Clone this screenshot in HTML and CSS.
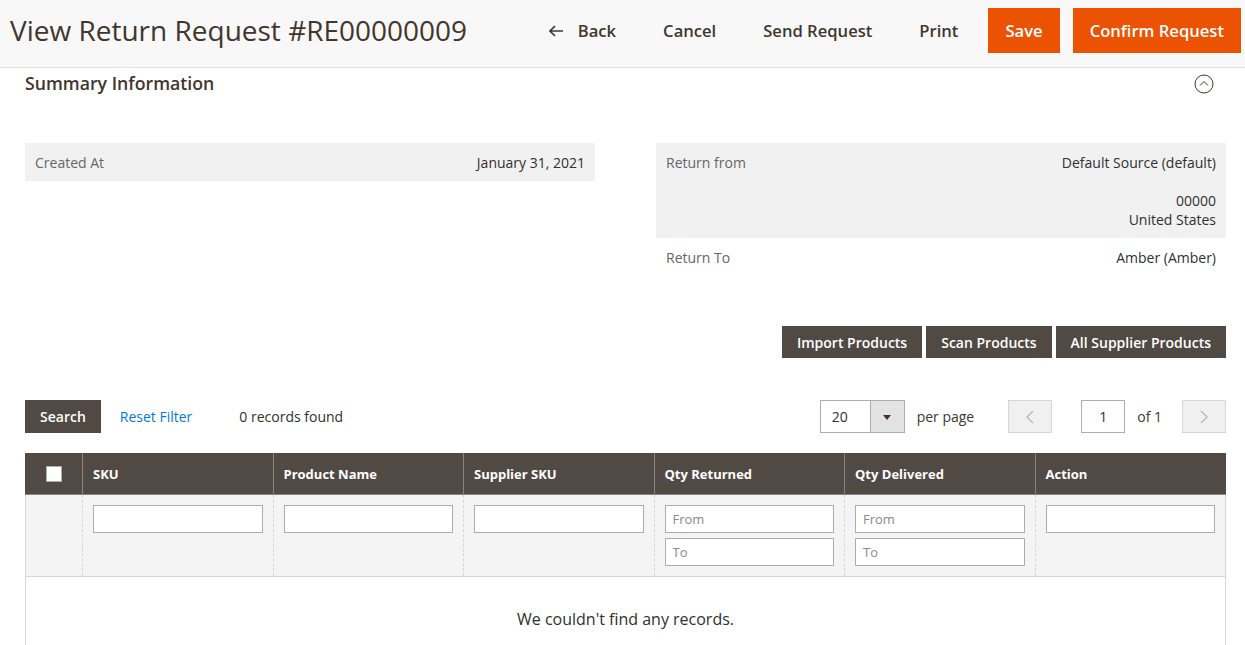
FILE: index.html
```html
<!DOCTYPE html>
<html lang="en">
<head>
    <meta charset="UTF-8">
    <meta name="viewport" content="width=device-width, initial-scale=1.0">
    <title>View Return Request #RE00000009</title>
    <link rel="stylesheet" href="styles.css">
</head>
<body>
    <header class="page-header">
        <h1 class="page-title">View Return Request #RE00000009</h1>
        <div class="page-actions">
            <button class="action-link back">
                <svg width="15" height="12" viewBox="0 0 15 12"><path d="M6 1 L1 6 L6 11 M1 6 H14" fill="none" stroke="#41362f" stroke-width="1.6"/></svg>
                Back
            </button>
            <button class="action-link">Cancel</button>
            <button class="action-link">Send Request</button>
            <button class="action-link">Print</button>
            <button class="action-primary">Save</button>
            <button class="action-primary">Confirm Request</button>
        </div>
    </header>

    <main class="page-content">
        <section class="summary">
            <div class="section-title">
                <span>Summary Information</span>
                <svg class="collapse" width="20" height="20" viewBox="0 0 20 20"><circle cx="10" cy="10" r="9" fill="none" stroke="#41362f" stroke-width="1"/><path d="M6 11.5 L10 7.5 L14 11.5" fill="none" stroke="#41362f" stroke-width="1"/></svg>
            </div>
            <div class="summary-cols">
                <table class="info-table">
                    <tr class="shaded">
                        <th>Created At</th>
                        <td>January 31, 2021</td>
                    </tr>
                </table>
                <table class="info-table">
                    <tr class="shaded">
                        <th>Return from</th>
                        <td>Default Source (default)<br><br>00000<br>United States</td>
                    </tr>
                    <tr>
                        <th>Return To</th>
                        <td>Amber (Amber)</td>
                    </tr>
                </table>
            </div>
        </section>

        <div class="product-actions">
            <button class="action-secondary">Import Products</button>
            <button class="action-secondary">Scan Products</button>
            <button class="action-secondary">All Supplier Products</button>
        </div>

        <div class="grid-toolbar">
            <div class="toolbar-left">
                <button class="action-secondary search">Search</button>
                <a class="reset-link" href="#">Reset Filter</a>
                <span class="records">0 records found</span>
            </div>
            <div class="pager">
                <div class="limit">
                    <span class="limit-value">20</span>
                    <span class="limit-toggle"></span>
                </div>
                <span class="per-page">per page</span>
                <button class="pager-btn prev">
                    <svg width="8" height="14" viewBox="0 0 8 14"><path d="M7 1 L1 7 L7 13" fill="none" stroke="#b8b8b8" stroke-width="1.3"/></svg>
                </button>
                <input class="page-input" type="text" value="1">
                <span class="page-total">of 1</span>
                <button class="pager-btn next">
                    <svg width="8" height="14" viewBox="0 0 8 14"><path d="M1 1 L7 7 L1 13" fill="none" stroke="#b8b8b8" stroke-width="1.3"/></svg>
                </button>
            </div>
        </div>

        <table class="data-grid">
            <thead>
                <tr>
                    <th class="col-check"><span class="checkbox"></span></th>
                    <th>SKU</th>
                    <th>Product Name</th>
                    <th>Supplier SKU</th>
                    <th>Qty Returned</th>
                    <th>Qty Delivered</th>
                    <th>Action</th>
                </tr>
            </thead>
            <tbody>
                <tr class="filters">
                    <td class="col-check"></td>
                    <td><input type="text"></td>
                    <td><input type="text"></td>
                    <td><input type="text"></td>
                    <td><input type="text" placeholder="From"><input type="text" placeholder="To"></td>
                    <td><input type="text" placeholder="From"><input type="text" placeholder="To"></td>
                    <td><input type="text"></td>
                </tr>
                <tr class="empty">
                    <td colspan="7">We couldn't find any records.</td>
                </tr>
            </tbody>
        </table>
    </main>
</body>
</html>
```

FILE: styles.css
```css
body {
    margin: 0;
    font-family: 'Open Sans', 'Noto Sans', sans-serif;
    font-size: 14px;
    color: #303030;
    background: #fff;
}
button {
    font-family: inherit;
    cursor: pointer;
}
.page-header {
    display: flex;
    justify-content: space-between;
    align-items: flex-start;
    height: 68px;
    padding: 8px 4px 0 10px;
    box-sizing: border-box;
    background: #f8f8f8;
    border-bottom: 1px solid #e3e3e3;
}
.page-title {
    margin: 0;
    font-size: 28px;
    font-weight: 400;
    line-height: 45px;
    color: #41362f;
}
.page-actions {
    display: flex;
}
.action-link,
.action-primary {
    height: 45px;
    padding: 0 17px;
    margin-left: 13px;
    border: none;
    font-size: 16.6px;
    font-weight: 600;
}
.action-link {
    background: transparent;
    color: #41362f;
    display: flex;
    align-items: center;
}
.action-link.back svg {
    margin-right: 14px;
}
.action-primary {
    background: #eb5202;
    color: #fff;
}
.page-content {
    padding: 0 19px 0 25px;
}
.section-title {
    display: flex;
    justify-content: space-between;
    align-items: center;
    padding-top: 4px;
    font-size: 17.7px;
    font-weight: 600;
    line-height: 20px;
    color: #41362f;
}
.collapse {
    margin-right: 12px;
    margin-top: 2px;
}
.summary-cols {
    display: grid;
    grid-template-columns: 570px 570px;
    justify-content: space-between;
    margin-top: 49px;
    align-items: start;
}
.info-table {
    width: 100%;
    border-collapse: collapse;
}
.info-table th,
.info-table td {
    padding: 10px 10px 9px;
    line-height: 19px;
    vertical-align: top;
}
.info-table th {
    text-align: left;
    font-weight: 400;
    color: #666;
}
.info-table td {
    text-align: right;
    color: #303030;
}
.info-table .shaded {
    background: #f1f1f1;
}
.product-actions {
    display: flex;
    justify-content: flex-end;
    gap: 4px;
    margin-top: 50px;
}
.action-secondary {
    height: 32px;
    padding: 0 15px;
    border: none;
    background: #514943;
    color: #fff;
    font-size: 14px;
    font-weight: 600;
}
.grid-toolbar {
    display: flex;
    justify-content: space-between;
    align-items: center;
    margin-top: 42px;
    height: 33px;
}
.toolbar-left {
    display: flex;
    align-items: center;
}
.search {
    height: 33px;
}
.reset-link {
    margin-left: 19px;
    color: #007bdb;
    text-decoration: none;
}
.records {
    margin-left: 47px;
}
.pager {
    display: flex;
    align-items: center;
}
.limit {
    display: flex;
    width: 85px;
    height: 33px;
    box-sizing: border-box;
    border: 1px solid #adadad;
}
.limit-value {
    flex: 1;
    padding-left: 11px;
    line-height: 31px;
}
.limit-toggle {
    position: relative;
    width: 33px;
    background: #e3e3e3;
    border-left: 1px solid #adadad;
}
.limit-toggle::after {
    content: "";
    position: absolute;
    left: 12px;
    top: 14px;
    border-left: 4px solid transparent;
    border-right: 4px solid transparent;
    border-top: 5px solid #41362f;
}
.per-page {
    margin-left: 12px;
    color: #41362f;
}
.pager-btn {
    width: 44px;
    height: 33px;
    border: 1px solid #d6d6d6;
    background: #f0f0f0;
    display: flex;
    align-items: center;
    justify-content: center;
}
.prev {
    margin-left: 34px;
}
.next {
    margin-left: 20px;
}
.page-input {
    width: 44px;
    height: 33px;
    box-sizing: border-box;
    margin-left: 29px;
    border: 1px solid #adadad;
    text-align: center;
    font-family: inherit;
    font-size: 14px;
    color: #303030;
}
.page-total {
    margin-left: 12px;
    color: #41362f;
}
.data-grid {
    width: 100%;
    margin-top: 20px;
    border-collapse: collapse;
    table-layout: fixed;
}
.data-grid th {
    height: 41px;
    box-sizing: border-box;
    padding: 0 10px 1px;
    background: #514943;
    color: #fff;
    font-size: 13px;
    font-weight: 700;
    text-align: left;
    border: 1px solid #8a837f;
    border-top-color: #514943;
}
.data-grid th:first-child {
    border-left-color: #514943;
}
.data-grid th:last-child {
    border-right-color: #514943;
}
.data-grid .col-check {
    width: 57px;
    text-align: center;
}
.checkbox {
    display: inline-block;
    width: 14px;
    height: 14px;
    margin-top: 4px;
    background: #fff;
    border: 1px solid #adadad;
}
.filters td {
    background: #f4f4f4;
    padding: 10px;
    vertical-align: top;
    border-left: 1px dashed #d6d6d6;
    border-right: 1px dashed #d6d6d6;
    border-bottom: 1px solid #d6d6d6;
    height: 61px;
}
.filters td:first-child {
    border-left: 1px solid #d6d6d6;
}
.filters td:last-child {
    border-right: 1px solid #d6d6d6;
}
.filters input {
    display: block;
    width: 100%;
    height: 28px;
    box-sizing: border-box;
    margin-bottom: 5px;
    padding: 0 7px;
    border: 1px solid #adadad;
    font-family: inherit;
    font-size: 13px;
}
.filters input:last-child {
    margin-bottom: 0;
}
.filters input::placeholder {
    color: #8a8a8a;
}
.empty td {
    height: 82px;
    text-align: center;
    font-size: 16px;
    color: #303030;
    border: 1px solid #d6d6d6;
    border-top: none;
}
```
